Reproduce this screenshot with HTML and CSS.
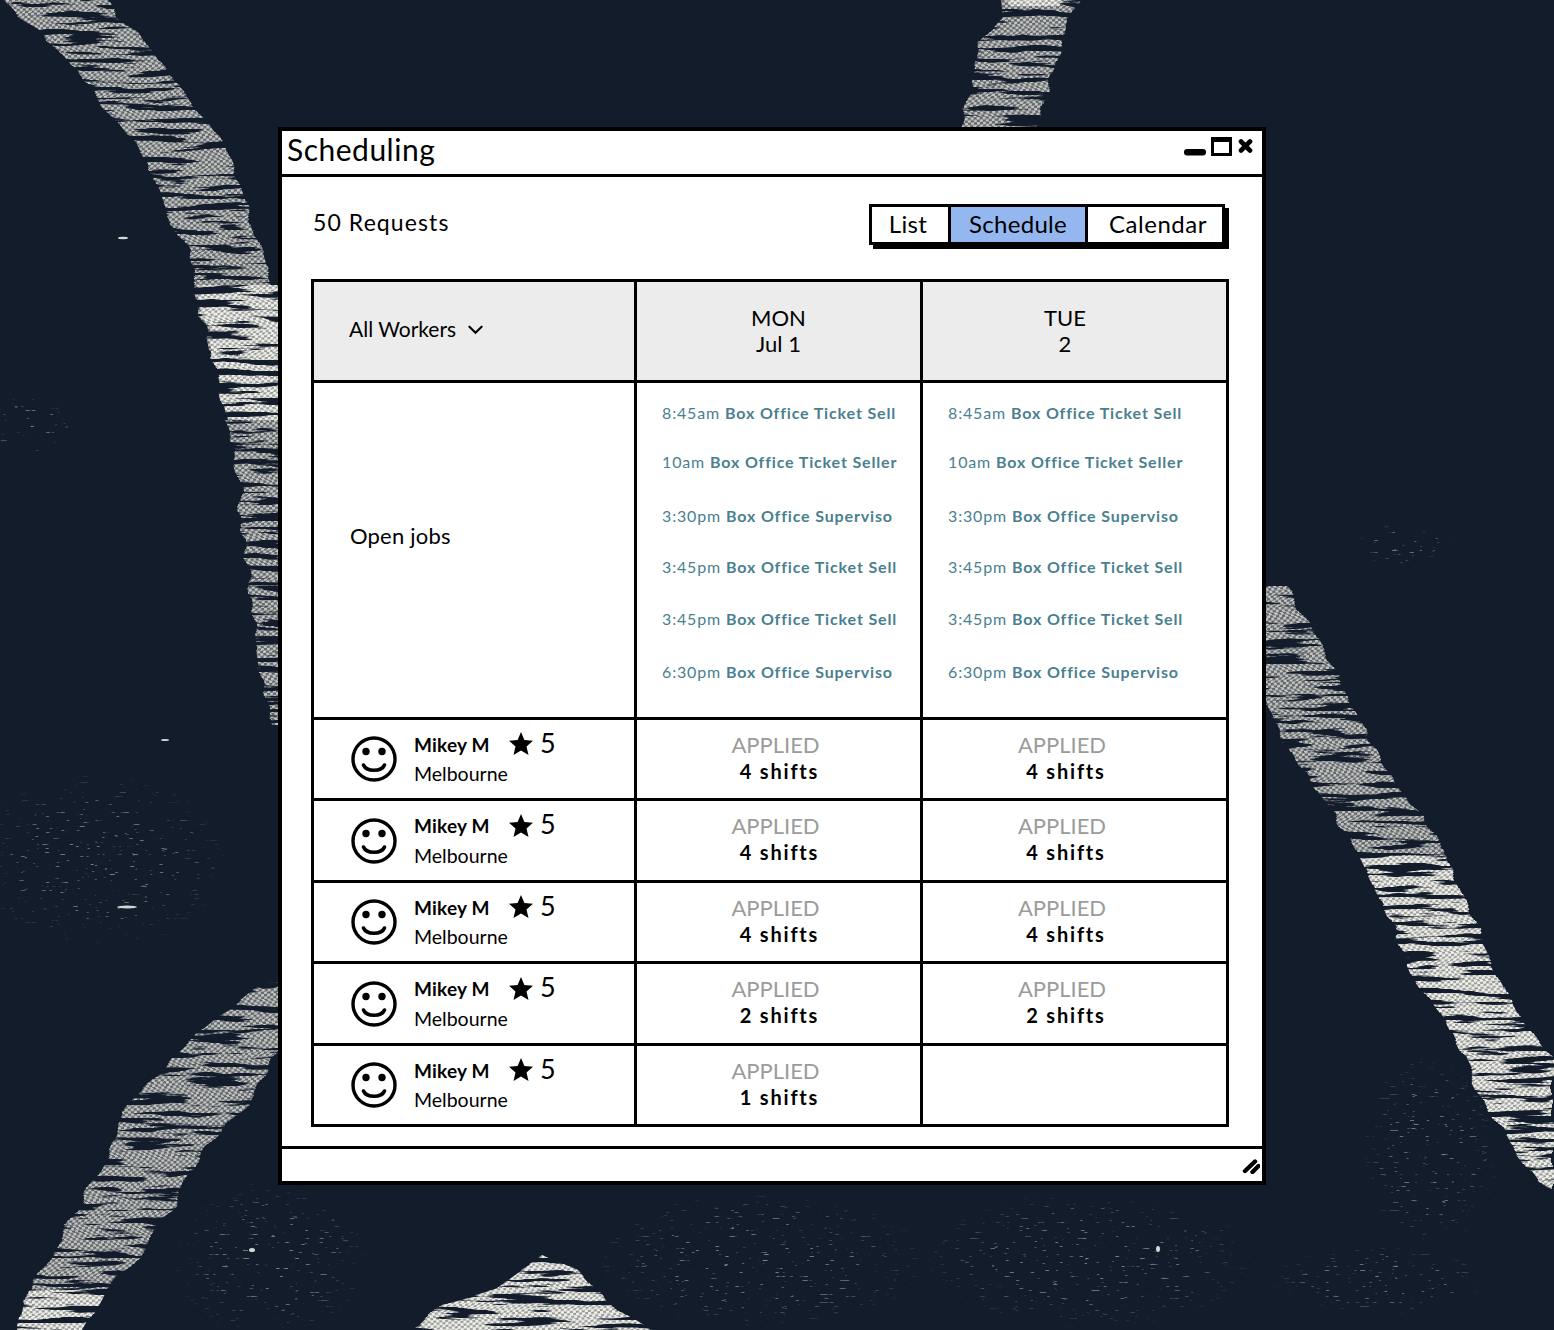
FILE: index.html
```html
<!DOCTYPE html>
<html lang="en">
<head>
<meta charset="utf-8">
<title>Scheduling</title>
<link rel="stylesheet" href="styles.css">
</head>
<body>
<div class="stage">
  <svg class="backdrop" width="1554" height="1330" viewBox="0 0 1554 1330" aria-hidden="true">
    <defs>
      <pattern id="dots-dim" width="6" height="5" patternUnits="userSpaceOnUse" patternTransform="rotate(-4)">
        <rect width="6" height="5" fill="#5f6469"/>
        <circle cx="1.5" cy="1.25" r="1.6" fill="#c8c9c5"/>
        <circle cx="4.5" cy="3.75" r="1.6" fill="#c8c9c5"/>
      </pattern>
      <pattern id="dots-bright" width="6" height="5" patternUnits="userSpaceOnUse" patternTransform="rotate(-4)">
        <rect width="6" height="5" fill="#96999a"/>
        <circle cx="1.5" cy="1.25" r="1.8" fill="#f1f1e9"/>
        <circle cx="4.5" cy="3.75" r="1.8" fill="#f1f1e9"/>
      </pattern>
      <radialGradient id="fade">
        <stop offset="0" stop-color="#c9cdd0" stop-opacity="1"/>
        <stop offset="0.6" stop-color="#c9cdd0" stop-opacity="0.7"/>
        <stop offset="1" stop-color="#c9cdd0" stop-opacity="0"/>
      </radialGradient>
      <filter id="chalk" x="0" y="0" width="1554" height="1330" filterUnits="userSpaceOnUse" color-interpolation-filters="sRGB">
        <feTurbulence type="fractalNoise" baseFrequency="0.016 0.17" numOctaves="3" seed="7" result="streak"/>
        <feColorMatrix in="streak" type="matrix" values="0 0 0 0 1  0 0 0 0 1  0 0 0 0 1  14 0 0 0 -5.7" result="mask"/>
        <feComposite in="SourceGraphic" in2="mask" operator="in" result="cut"/>
        <feTurbulence type="fractalNoise" baseFrequency="0.003 0.06" numOctaves="1" seed="3" result="rows"/>
        <feColorMatrix in="rows" type="matrix" values="1 0 0 0 0  0 0 0 0 0.5  0 0 0 0 0  0 0 0 0 1" result="shift"/>
        <feDisplacementMap in="cut" in2="shift" scale="18" xChannelSelector="R" yChannelSelector="G" result="moved"/>
        <feGaussianBlur in="moved" stdDeviation="0.55"/>
      </filter>
      <filter id="specks" x="0" y="0" width="1554" height="1330" filterUnits="userSpaceOnUse" color-interpolation-filters="sRGB">
        <feTurbulence type="fractalNoise" baseFrequency="0.1 0.5" numOctaves="2" seed="11" result="grain"/>
        <feColorMatrix in="grain" type="matrix" values="0 0 0 0 0.8  0 0 0 0 0.82  0 0 0 0 0.82  14 0 0 0 -9.9" result="mask"/>
        <feComposite in="SourceGraphic" in2="mask" operator="in"/>
      </filter>
    </defs>
    <g filter="url(#specks)" opacity="0.6">
      <ellipse cx="30" cy="425" rx="50" ry="30" fill="url(#fade)"/>
      <ellipse cx="1405" cy="545" rx="50" ry="22" fill="url(#fade)"/>
      <ellipse cx="100" cy="860" rx="130" ry="90" fill="url(#fade)"/>
      <ellipse cx="270" cy="1260" rx="100" ry="80" fill="url(#fade)"/>
      <ellipse cx="760" cy="1260" rx="170" ry="70" fill="url(#fade)"/>
      <ellipse cx="1090" cy="1260" rx="170" ry="70" fill="url(#fade)"/>
      <ellipse cx="1430" cy="1150" rx="70" ry="100" fill="url(#fade)"/>
      <ellipse cx="1380" cy="1280" rx="110" ry="35" fill="url(#fade)"/>
    </g>
    <g fill="#d5d7d6">
      <ellipse cx="123" cy="238" rx="5" ry="1.200"/>
      <ellipse cx="127" cy="907" rx="10" ry="1.500"/>
      <ellipse cx="165" cy="740" rx="4" ry="1"/>
      <ellipse cx="1158" cy="1249" rx="2" ry="3"/>
      <ellipse cx="252" cy="1250" rx="3" ry="2"/>
    </g>
    <g filter="url(#chalk)">
      <polygon fill="url(#dots-dim)" points="4,0 109,0 119,17 141,33 156,60 193,100 228,150 244,200 261,250 276,300 284,340 284,380 209,350 199,300 187,250 162,200 141,150 101,100 66,60 44,33 19,17"/>
      <polygon fill="url(#dots-bright)" points="199,285 278,285 290,300 290,430 227,420 219,380 209,340"/>
      <polygon fill="url(#dots-dim)" points="224,420 300,420 300,725 270,725 262,680 252,600 244,540 239,480"/>
      <polygon fill="url(#dots-dim)" points="1001,0 1079,0 1070,17 1063,43 1050,77 1040,117 1035,130 962,130 965,117 973,77 980,43 1003,17"/>
      <polygon fill="url(#dots-bright)" points="1005,-5 1062,-5 1058,6 1010,6"/>
      <polygon fill="url(#dots-dim)" points="1262,586 1285,586 1326,652 1344,692 1368,733 1388,774 1421,815 1446,856 1400,856 1359,856 1336,815 1304,774 1279,733 1262,692"/>
      <polygon fill="url(#dots-bright)" points="1359,856 1446,856 1464,896 1479,937 1501,978 1521,1019 1551,1060 1566,1100 1566,1195 1539,1182 1509,1141 1484,1100 1464,1060 1444,1019 1414,978 1397,937 1379,896"/>
      <polygon fill="url(#dots-dim)" points="260,985 295,975 295,1036 268,1066 246,1106 196,1156 176,1206 136,1256 106,1290 29,1290 54,1250 84,1200 109,1150 129,1100 204,1030"/>
      <polygon fill="url(#dots-bright)" points="26,1290 106,1290 101,1300 81,1335 16,1335"/>
      <polygon fill="url(#dots-bright)" points="545,1255 578,1270 604,1300 660,1335 410,1335 441,1305 497,1288 518,1273"/>
    </g>
  </svg>

  <svg class="icon-defs" width="0" height="0" aria-hidden="true">
    <symbol id="smiley" viewBox="0 0 46 46">
      <circle cx="23" cy="23" r="21" fill="none" stroke="#000" stroke-width="3.4"/>
      <circle cx="15" cy="15.5" r="3.7" fill="#000"/>
      <circle cx="31" cy="15.5" r="3.7" fill="#000"/>
      <path d="M12.5 29c3 7 18 7 21 0" fill="none" stroke="#000" stroke-width="3.6" stroke-linecap="round"/>
    </symbol>
    <symbol id="star" viewBox="0 0 24 23">
      <path d="M12 0l3.4 8 8.6.7-6.5 5.7 2 8.6L12 18.400 4.500 23l2-8.600L0 8.700 8.600 8z" fill="#000"/>
    </symbol>
  </svg>

  <main class="window">
    <header class="titlebar">
      <h1 class="title">Scheduling</h1>
      <svg class="controls" width="70" height="22" viewBox="0 0 70 22" aria-hidden="true">
        <rect x="1" y="14" width="22" height="6.500" rx="3" fill="#000"/>
        <rect x="29.500" y="3.500" width="18" height="16" fill="#fff" stroke="#000" stroke-width="3"/>
        <rect x="28" y="2" width="21" height="5" fill="#000"/>
        <path d="M58 6.500l9 9M67 6.500l-9 9" stroke="#000" stroke-width="4.600" stroke-linecap="round"/>
      </svg>
    </header>

    <section class="content">
      <div class="toolbar">
        <div class="requests">50 Requests</div>
        <div class="segments">
          <div class="seg seg-list">List</div>
          <div class="seg seg-schedule">Schedule</div>
          <div class="seg seg-calendar">Calendar</div>
        </div>
      </div>

      <div class="table">
        <div class="cell head head-first">
          <span>All Workers</span>
          <svg class="chevron" width="16" height="10" viewBox="0 0 16 10" aria-hidden="true"><path d="M1.500 1.500L8 8l6.500-6.500" fill="none" stroke="#000" stroke-width="2.200" stroke-linecap="round"/></svg>
        </div>
        <div class="cell head col2">MON<br>Jul 1</div>
        <div class="cell head col3">TUE<br>2</div>

        <div class="cell open-label">Open jobs</div>
        <div class="cell jobs col2">
          <div class="job">8:45am <b>Box Office Ticket Sell</b></div>
          <div class="job">10am <b>Box Office Ticket Seller</b></div>
          <div class="job">3:30pm <b>Box Office Superviso</b></div>
          <div class="job">3:45pm <b>Box Office Ticket Sell</b></div>
          <div class="job">3:45pm <b>Box Office Ticket Sell</b></div>
          <div class="job">6:30pm <b>Box Office Superviso</b></div>
        </div>
        <div class="cell jobs col3">
          <div class="job">8:45am <b>Box Office Ticket Sell</b></div>
          <div class="job">10am <b>Box Office Ticket Seller</b></div>
          <div class="job">3:30pm <b>Box Office Superviso</b></div>
          <div class="job">3:45pm <b>Box Office Ticket Sell</b></div>
          <div class="job">3:45pm <b>Box Office Ticket Sell</b></div>
          <div class="job">6:30pm <b>Box Office Superviso</b></div>
        </div>

        <div class="cell worker">
          <svg class="avatar"><use href="#smiley"/></svg>
          <div class="who"><div class="who-top"><span class="name">Mikey M</span><svg class="star"><use href="#star"/></svg><span class="rating">5</span></div><div class="place">Melbourne</div></div>
        </div>
        <div class="cell status col2"><span class="applied">APPLIED</span><span class="shifts">4 shifts</span></div>
        <div class="cell status col3"><span class="applied">APPLIED</span><span class="shifts">4 shifts</span></div>

        <div class="cell worker">
          <svg class="avatar"><use href="#smiley"/></svg>
          <div class="who"><div class="who-top"><span class="name">Mikey M</span><svg class="star"><use href="#star"/></svg><span class="rating">5</span></div><div class="place">Melbourne</div></div>
        </div>
        <div class="cell status col2"><span class="applied">APPLIED</span><span class="shifts">4 shifts</span></div>
        <div class="cell status col3"><span class="applied">APPLIED</span><span class="shifts">4 shifts</span></div>

        <div class="cell worker">
          <svg class="avatar"><use href="#smiley"/></svg>
          <div class="who"><div class="who-top"><span class="name">Mikey M</span><svg class="star"><use href="#star"/></svg><span class="rating">5</span></div><div class="place">Melbourne</div></div>
        </div>
        <div class="cell status col2"><span class="applied">APPLIED</span><span class="shifts">4 shifts</span></div>
        <div class="cell status col3"><span class="applied">APPLIED</span><span class="shifts">4 shifts</span></div>

        <div class="cell worker">
          <svg class="avatar"><use href="#smiley"/></svg>
          <div class="who"><div class="who-top"><span class="name">Mikey M</span><svg class="star"><use href="#star"/></svg><span class="rating">5</span></div><div class="place">Melbourne</div></div>
        </div>
        <div class="cell status col2"><span class="applied">APPLIED</span><span class="shifts">2 shifts</span></div>
        <div class="cell status col3"><span class="applied">APPLIED</span><span class="shifts">2 shifts</span></div>

        <div class="cell worker">
          <svg class="avatar"><use href="#smiley"/></svg>
          <div class="who"><div class="who-top"><span class="name">Mikey M</span><svg class="star"><use href="#star"/></svg><span class="rating">5</span></div><div class="place">Melbourne</div></div>
        </div>
        <div class="cell status col2"><span class="applied">APPLIED</span><span class="shifts">1 shifts</span></div>
        <div class="cell status col3"></div>
      </div>
    </section>

    <footer class="statusbar">
      <svg class="grip" width="20" height="18" viewBox="0 0 20 18" aria-hidden="true"><path d="M5 15L15 5.500M12.500 16L18.500 10" stroke="#000" stroke-width="4.400" stroke-linecap="round"/></svg>
    </footer>
  </main>
</div>
</body>
</html>
```

FILE: styles.css
```css
* { box-sizing: border-box; }

html, body { margin: 0; padding: 0; }

body {
  font-family: "Lato", "Noto Sans", sans-serif;
  color: #000;
  background: #131c2b;
}

.stage {
  position: relative;
  width: 1554px;
  height: 1330px;
  padding: 127px 0 0 278px;
  overflow: hidden;
  background: #131c2b;
}

.backdrop {
  position: absolute;
  left: 0;
  top: 0;
}

.icon-defs {
  position: absolute;
}

.window {
  position: relative;
  width: 988px;
  height: 1058px;
  display: flex;
  flex-direction: column;
  background: #fff;
  border: 4px solid #000;
}

.titlebar {
  flex: none;
  height: 46px;
  display: flex;
  align-items: flex-start;
  justify-content: space-between;
  padding: 0 9px 0 5px;
  border-bottom: 3px solid #000;
}

.title {
  margin: 0;
  font-size: 30px;
  font-weight: 400;
  line-height: 36px;
  letter-spacing: 0.5px;
}

.controls {
  display: block;
  margin-top: 4px;
}

.content {
  flex: 1;
  padding: 27px 36px 0 29px;
}

.toolbar {
  display: flex;
  align-items: flex-start;
  justify-content: space-between;
  height: 41px;
  margin-bottom: 34px;
}

.requests {
  margin: 3px 0 0 2px;
  font-size: 23px;
  line-height: 30px;
  letter-spacing: 1.1px;
}

.segments {
  display: flex;
  height: 41px;
  margin-right: 1px;
  border: 3px solid #000;
  box-shadow: 4px 4px 0 #000;
  font-size: 24px;
  line-height: 33px;
  letter-spacing: 0.3px;
  text-align: center;
}

.seg-list {
  width: 76px;
  padding-right: 4px;
}

.seg-schedule {
  width: 140px;
  background: #93b7ee;
  border-left: 3px solid #000;
  border-right: 3px solid #000;
}

.seg-calendar {
  width: 134px;
  padding-left: 6px;
  letter-spacing: 0.55px;
}

.table {
  display: grid;
  grid-template-columns: 320px 286px 306px;
  grid-template-rows: 98px 337px 81px 82px 81px 82px 81px;
  width: 918px;
  height: 848px;
  border: 3px solid #000;
}

.cell {
  border-top: 3px solid #000;
}

.head {
  border-top: 0;
  background: #ececec;
  font-size: 22px;
  line-height: 26px;
  text-align: center;
  padding-top: 23px;
}

.head-first {
  display: flex;
  align-items: center;
  gap: 12px;
  padding: 0 0 4px 35px;
  font-size: 21px;
}

.chevron {
  display: block;
  width: 15px;
  margin-top: 2px;
}

.col2 { border-left: 3px solid #000; }

.col3 {
  border-left: 3px solid #000;
  padding-right: 19px;
}

.open-label {
  display: flex;
  align-items: center;
  padding: 0 0 30px 36px;
  font-size: 22px;
  letter-spacing: 0.2px;
}

.jobs {
  display: grid;
  grid-template-rows: 49px 54px 51px 52px 53px 52px;
  align-content: start;
  padding: 16px 0 0 25px;
  color: #4a7f8f;
  font-size: 16px;
  letter-spacing: 0.85px;
}

.job {
  line-height: 28px;
  white-space: nowrap;
}

.job b { font-weight: 700; }

.status {
  display: flex;
  flex-direction: column;
  align-items: center;
  justify-content: center;
  line-height: 26px;
  padding-bottom: 3px;
}

.applied {
  margin-right: 6px;
  color: #9b9b9b;
  font-size: 22px;
}

.shifts {
  margin-left: 2px;
  font-size: 20px;
  font-weight: 700;
  letter-spacing: 1.8px;
}

.worker {
  display: flex;
  align-items: center;
  gap: 17px;
  padding-left: 37px;
}

.avatar {
  display: block;
  flex: none;
  width: 46px;
  height: 46px;
}

.who { margin-top: -2px; }

.who-top {
  display: flex;
  align-items: center;
  height: 30px;
}

.name {
  width: 95px;
  font-size: 19px;
  font-weight: 700;
  letter-spacing: 0.2px;
  margin-top: 2px;
}

.star {
  display: block;
  width: 24px;
  height: 23px;
  margin-top: 1px;
}

.rating {
  margin: -2px 0 0 7px;
  font-size: 27px;
}

.place {
  font-size: 19.500px;
  line-height: 28px;
  margin-top: 2px;
}

.statusbar {
  flex: none;
  height: 35px;
  display: flex;
  align-items: center;
  justify-content: flex-end;
  padding-right: 2px;
  border-top: 3px solid #000;
}

.grip { display: block; }
```
